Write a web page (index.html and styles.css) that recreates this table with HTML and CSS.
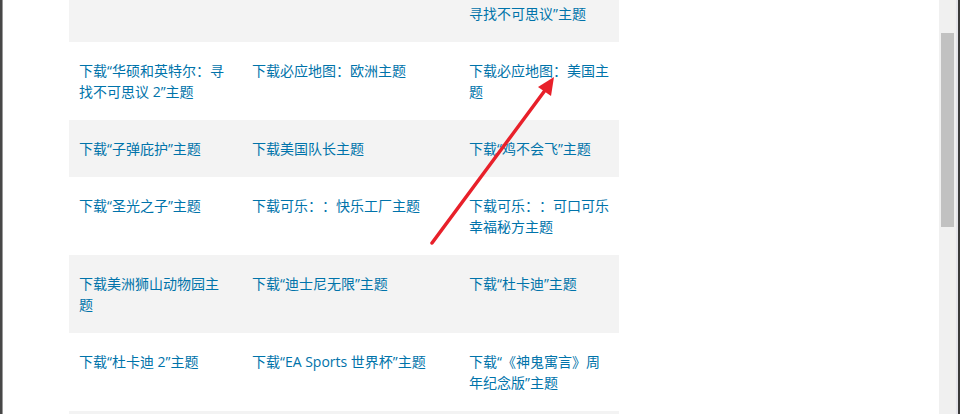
FILE: index.html
```html
<!DOCTYPE html>
<html lang="zh-CN">
<head>
  <meta charset="UTF-8">
  <meta name="viewport" content="width=device-width, initial-scale=1.0">
  <title>主题下载</title>
  <link rel="stylesheet" href="styles.css">
</head>
<body>
  <div class="frame">
    <div class="edge-left"></div>
    <main class="page">
      <table class="themes">
        <colgroup><col class="c1"><col class="c2"><col class="c3"></colgroup>
        <tbody>
          <tr><td></td><td></td><td><a href="#">下载“华硕和英特尔：寻找不可思议”主题</a></td></tr>
          <tr><td><a href="#">下载“华硕和英特尔：寻找不可思议 2”主题</a></td><td><a href="#">下载必应地图：欧洲主题</a></td><td><a href="#">下载必应地图：美国主题</a></td></tr>
          <tr><td><a href="#">下载“子弹庇护”主题</a></td><td><a href="#">下载美国队长主题</a></td><td><a href="#">下载“鸡不会飞”主题</a></td></tr>
          <tr><td><a href="#">下载“圣光之子”主题</a></td><td><a href="#">下载可乐：：快乐工厂主题</a></td><td><a href="#">下载可乐：：可口可乐幸福秘方主题</a></td></tr>
          <tr><td><a href="#">下载美洲狮山动物园主题</a></td><td><a href="#">下载“迪士尼无限”主题</a></td><td><a href="#">下载“杜卡迪”主题</a></td></tr>
          <tr><td><a href="#">下载“杜卡迪 2”主题</a></td><td><a href="#">下载“EA Sports 世界杯”主题</a></td><td><a href="#">下载“《神鬼寓言》周年纪念版”主题</a></td></tr>
          <tr><td><a href="#">下载“极品飞车”主题</a></td><td><a href="#">下载“光环”主题</a></td><td><a href="#">下载“我的世界”主题</a></td></tr>
        </tbody>
      </table>
    </main>
    <div class="scrollbar"><div class="thumb"></div></div>
    <div class="edge-right"></div>

    <!-- annotation arrow -->
    <svg class="arrow" width="960" height="414" viewBox="0 0 960 414">
      <line x1="432" y1="243" x2="546" y2="89" stroke="#e8202a" stroke-width="3.5" stroke-linecap="round"/>
      <polygon points="554,77 538,87 551,96" fill="#e8202a"/>
    </svg>
  </div>
</body>
</html>
```

FILE: styles.css
```css
html, body { margin: 0; padding: 0; background: #fff; }
body { font-family: "Open Sans", "Noto Sans CJK SC", sans-serif; font-size: 14px; }
.frame { position: relative; display: flex; width: 960px; height: 414px; overflow: hidden; }
.edge-left { width: 2px; background: #474747; border-right: 1px solid #9a9a9a; }
.page { flex: 1; overflow: hidden; background: #fff; }
.scrollbar { width: 17px; background: #f0f0f0; padding: 33px 2px 0 2px; box-sizing: border-box; }
.thumb { height: 194px; background: #c1c1c1; }
.edge-right { width: 2px; background: #e4e4ea; border-right: 2px solid #3a3a3a; }
.arrow { position: absolute; left: 0; top: 0; pointer-events: none; }

.themes { table-layout: fixed; border-collapse: collapse; width: 550px; margin: -36px 0 0 66px; }
.themes col.c1 { width: 173px; }
.themes col.c2 { width: 217px; }
.themes col.c3 { width: 160px; }
.themes td { padding: 18px 10px; line-height: 21px; vertical-align: top; text-spacing-trim: space-all; }
.themes tr:nth-child(odd) td { background: #f3f3f3; }
.themes a { color: #0073aa; text-decoration: none; }
```
